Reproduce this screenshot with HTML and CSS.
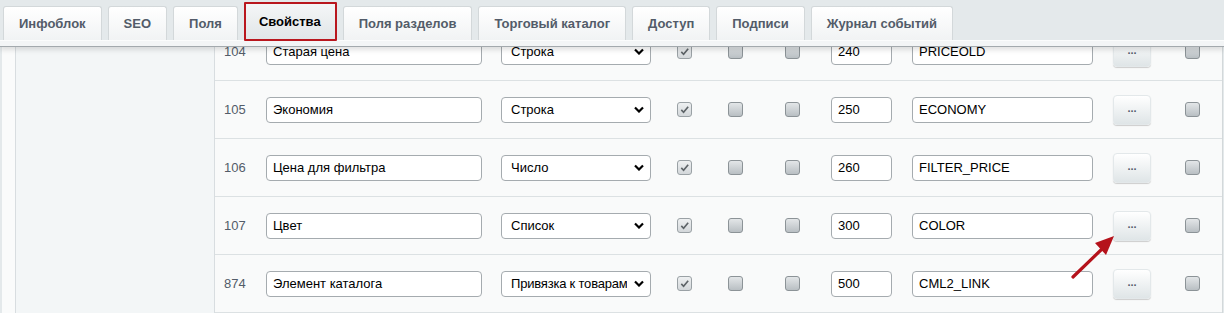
FILE: index.html
```html
<!DOCTYPE html>
<html lang="ru">
  <head>
    <meta charset="UTF-8" />
    <title>Свойства инфоблока</title>
    <link rel="stylesheet" href="styles.css">
  </head>
  <body>
    <div class="header">
      <div class="tabs">
        <div class="tab">Инфоблок</div>
        <div class="tab">SEO</div>
        <div class="tab">Поля</div>
        <div class="tab active">Свойства</div>
        <div class="tab">Поля разделов</div>
        <div class="tab">Торговый каталог</div>
        <div class="tab">Доступ</div>
        <div class="tab">Подписи</div>
        <div class="tab">Журнал событий</div>
      </div>
      <div class="tabs-line"></div>
    </div>

    <div class="content">
      <div class="side-gap"></div>
      <div class="side"></div>
      <div class="rows">
        <div class="row">
          <div class="id">104</div>
          <div><input class="inp name" type="text" value="Старая цена"></div>
          <div><div class="sel"><span>Строка</span><svg viewBox="0 0 10 7"><path d="M1 1.5 L5 5.5 L9 1.5" /></svg></div></div>
          <div><span class="cb checked"><svg viewBox="0 0 12 12"><path d="M2.5 6.5 L5 9 L10 3" /></svg></span></div>
          <div><span class="cb"></span></div>
          <div><span class="cb"></span></div>
          <div><input class="inp sort" type="text" value="240"></div>
          <div><input class="inp code" type="text" value="PRICEOLD"></div>
          <div><button class="more">...</button></div>
          <div><span class="cb"></span></div>
        </div>
        <div class="row">
          <div class="id">105</div>
          <div><input class="inp name" type="text" value="Экономия"></div>
          <div><div class="sel"><span>Строка</span><svg viewBox="0 0 10 7"><path d="M1 1.5 L5 5.5 L9 1.5" /></svg></div></div>
          <div><span class="cb checked"><svg viewBox="0 0 12 12"><path d="M2.5 6.5 L5 9 L10 3" /></svg></span></div>
          <div><span class="cb"></span></div>
          <div><span class="cb"></span></div>
          <div><input class="inp sort" type="text" value="250"></div>
          <div><input class="inp code" type="text" value="ECONOMY"></div>
          <div><button class="more">...</button></div>
          <div><span class="cb"></span></div>
        </div>
        <div class="row">
          <div class="id">106</div>
          <div><input class="inp name" type="text" value="Цена для фильтра"></div>
          <div><div class="sel"><span>Число</span><svg viewBox="0 0 10 7"><path d="M1 1.5 L5 5.5 L9 1.5" /></svg></div></div>
          <div><span class="cb checked"><svg viewBox="0 0 12 12"><path d="M2.5 6.5 L5 9 L10 3" /></svg></span></div>
          <div><span class="cb"></span></div>
          <div><span class="cb"></span></div>
          <div><input class="inp sort" type="text" value="260"></div>
          <div><input class="inp code" type="text" value="FILTER_PRICE"></div>
          <div><button class="more">...</button></div>
          <div><span class="cb"></span></div>
        </div>
        <div class="row">
          <div class="id">107</div>
          <div><input class="inp name" type="text" value="Цвет"></div>
          <div><div class="sel"><span>Список</span><svg viewBox="0 0 10 7"><path d="M1 1.5 L5 5.5 L9 1.5" /></svg></div></div>
          <div><span class="cb checked"><svg viewBox="0 0 12 12"><path d="M2.5 6.5 L5 9 L10 3" /></svg></span></div>
          <div><span class="cb"></span></div>
          <div><span class="cb"></span></div>
          <div><input class="inp sort" type="text" value="300"></div>
          <div><input class="inp code" type="text" value="COLOR"></div>
          <div><button class="more">...</button></div>
          <div><span class="cb"></span></div>
        </div>
        <div class="row">
          <div class="id">874</div>
          <div><input class="inp name" type="text" value="Элемент каталога"></div>
          <div><div class="sel"><span class="long">Привязка к товарам</span><svg viewBox="0 0 10 7"><path d="M1 1.5 L5 5.5 L9 1.5" /></svg></div></div>
          <div><span class="cb checked"><svg viewBox="0 0 12 12"><path d="M2.5 6.5 L5 9 L10 3" /></svg></span></div>
          <div><span class="cb"></span></div>
          <div><span class="cb"></span></div>
          <div><input class="inp sort" type="text" value="500"></div>
          <div><input class="inp code" type="text" value="CML2_LINK"></div>
          <div><button class="more">...</button></div>
          <div><span class="cb"></span></div>
        </div>
      </div>
    </div>

    <!-- pointer to the "..." button of COLOR -->
    <svg class="arrow" width="60" height="60" viewBox="0 0 60 60">
      <path d="M4 47 L33 19" stroke="#b5121b" stroke-width="3.2" stroke-linecap="round" />
      <path d="M45 6 L26 13 L37 25 Z" fill="#b5121b" />
    </svg>
  </body>
</html>
```

FILE: styles.css
```css
body {
  margin: 0;
  font-family: "Liberation Sans", Arial, sans-serif;
  font-size: 13px;
  background: #e4e9eb;
  overflow: hidden;
  position: relative;
}
.header {
  position: relative;
  z-index: 2;
  background: #e4e9eb;
  box-shadow: 0 3px 5px rgba(0, 0, 0, 0.12);
}
.tabs {
  display: flex;
  gap: 6px;
  padding: 6px 0 0 3px;
  height: 34px;
}
.tab {
  height: 33px;
  padding: 0 15px;
  display: flex;
  align-items: center;
  font-weight: bold;
  color: #535c69;
  background: linear-gradient(#ffffff, #f1f3f4);
  border: 1px solid #d3d8da;
  border-bottom: none;
  border-radius: 3px 3px 0 0;
}
.tab.active {
  color: #000;
  margin-top: -4px;
  height: 35px;
  padding: 0 14px 0 13px;
  background: linear-gradient(#f4f6f7, #e1e6e8);
  border: 2px solid #b9171e;
  border-radius: 1px;
}
.tabs-line {
  height: 5px;
  background: #f3f5f6;
  border-top: 1px solid #fbfcfc;
  border-bottom: 1px solid #a3a9ad;
}
.content {
  display: flex;
  margin: -24px 1px 0 2px;
  background: #f9fafa;
  border-right: 1px solid #d3d8da;
}
.side-gap {
  width: 13px;
  background: #fafbfb;
  border-right: 1px solid #d8dde0;
}
.side {
  width: 198px;
  background: #f3f6f7;
  border-right: 1px solid #d8dde0;
}
.rows {
  flex: 1;
}
.row {
  display: grid;
  grid-template-columns: 51px 235px 176px 51px 57px 46px 81px 201px 72px 1fr;
  align-items: center;
  height: 57px;
  border-bottom: 1px solid #dce1e3;
}
.row > div {
  display: flex;
  align-items: center;
}
.id {
  padding-left: 9px;
  color: #535c69;
}
.inp {
  box-sizing: border-box;
  height: 26px;
  margin: 0;
  padding: 0 6px;
  font-family: inherit;
  font-size: 13px;
  color: #000;
  background: #fff;
  border: 1px solid #a5abaf;
  border-radius: 4px;
}
.name {
  width: 216px;
}
.sort {
  width: 61px;
}
.code {
  width: 181px;
}
.sel {
  box-sizing: border-box;
  width: 150px;
  height: 26px;
  display: flex;
  align-items: center;
  justify-content: space-between;
  padding: 0 6px 0 9px;
  background: #fff;
  border: 1px solid #a5abaf;
  border-radius: 4px;
  overflow: hidden;
  white-space: nowrap;
}
.sel span {
  overflow: hidden;
  width: 116px;
}
.sel .long {
  letter-spacing: -0.2px;
}
.sel svg {
  width: 10px;
  height: 7px;
  flex: none;
}
.sel path {
  fill: none;
  stroke: #000;
  stroke-width: 2.2;
}
.cb {
  box-sizing: border-box;
  width: 15px;
  height: 15px;
  border: 1px solid #8c9397;
  border-radius: 3px;
  background: linear-gradient(#e3e6e8, #b9bfc3);
  display: flex;
  align-items: center;
  justify-content: center;
}
.cb.checked {
  background: linear-gradient(#eef0f1, #d3d7da);
  border-color: #9aa1a5;
}
.cb svg {
  width: 11px;
  height: 11px;
}
.cb path {
  fill: none;
  stroke: #5d6367;
  stroke-width: 1.8;
}
.more {
  width: 38px;
  height: 30px;
  padding: 0 0 4px;
  font-family: inherit;
  font-size: 11px;
  font-weight: bold;
  color: #535c69;
  background: linear-gradient(#ffffff, #dfe5e7);
  border: 1px solid #e3e8ea;
  border-radius: 4px;
  box-shadow: 0 1px 1px rgba(0, 0, 0, 0.18);
}
.arrow {
  position: absolute;
  left: 1069px;
  top: 230px;
  z-index: 3;
}
```
